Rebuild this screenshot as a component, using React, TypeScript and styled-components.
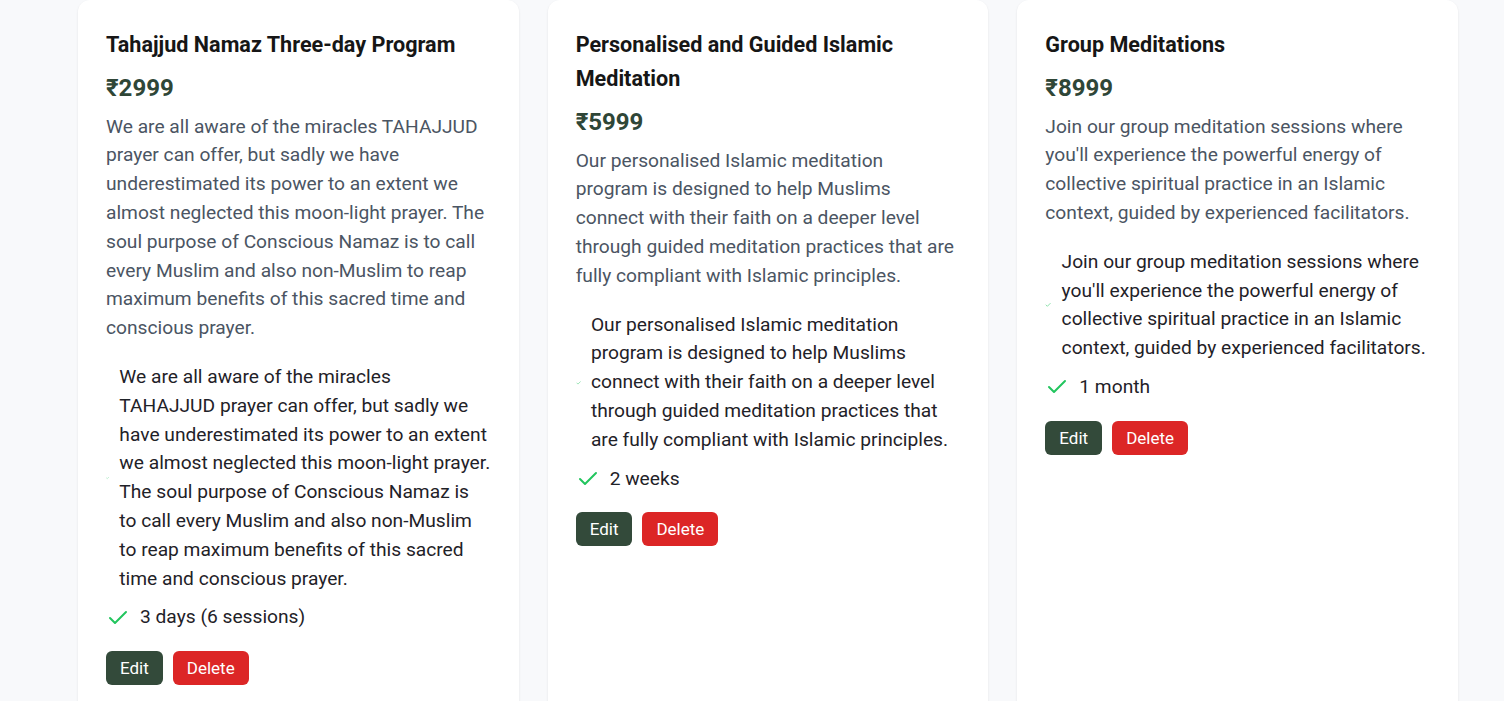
import React from "react";
import styled, { createGlobalStyle } from "styled-components";
import { Check } from "lucide-react";

const Global = createGlobalStyle`
  html, body { margin: 0; padding: 0; background: #f8f9fb; }
  body { font-family: Roboto, "Liberation Sans", Arial, sans-serif; -webkit-font-smoothing: antialiased; }
  * { box-sizing: border-box; }
`;

const Grid = styled.div`
  display: grid;
  grid-template-columns: repeat(3, 1fr);
  gap: 29px;
  padding: 0 46px 0 78px;
  align-items: stretch;
`;

const Card = styled.div`
  background: #ffffff;
  border-radius: 12px;
  box-shadow: 0 1px 3px rgba(0, 0, 0, 0.06), 0 1px 2px rgba(0, 0, 0, 0.04);
  padding: 28px;
  display: flex;
  flex-direction: column;
`;

const Title = styled.h3`
  margin: 0;
  font-size: 21.6px;
  line-height: 34px;
  font-weight: 700;
  color: #161616;
`;

const Price = styled.div`
  margin-top: 10px;
  font-size: 24px;
  line-height: 32px;
  font-weight: 700;
  color: #2f4637;
`;

const Desc = styled.p`
  margin: 8.6px 0 0;
  padding-right: 1.5px;
  font-size: 19.2px;
  line-height: 28.8px;
  color: #4b5563;
`;

const List = styled.ul`
  list-style: none;
  margin: 20px 0 0;
  padding: 0;
  display: flex;
  flex-direction: column;
  gap: 10px;
`;

const Item = styled.li`
  display: flex;
  align-items: center;
  gap: 10px;
  font-size: 19.2px;
  line-height: 28.8px;
  color: #1f2228;
  svg {
    color: #22c55e;
  }
`;

const Actions = styled.div`
  margin-top: 19px;
  display: flex;
  gap: 10px;
`;

const Btn = styled.button<{ $variant: "edit" | "delete" }>`
  border: none;
  border-radius: 6px;
  padding: 6px 14px;
  font-family: inherit;
  font-size: 17px;
  line-height: 22px;
  font-weight: 400;
  color: #ffffff;
  background: ${(p) => (p.$variant === "edit" ? "#334a3a" : "#dc2626")};
  cursor: pointer;
`;

type Program = { title: string; price: string; desc: string; duration: string };

const programs: Program[] = [
  {
    title: "Tahajjud Namaz Three-day Program",
    price: "₹2999",
    desc: "We are all aware of the miracles TAHAJJUD prayer can offer, but sadly we have underestimated its power to an extent we almost neglected this moon-light prayer. The soul purpose of Conscious Namaz is to call every Muslim and also non-Muslim to reap maximum benefits of this sacred time and conscious prayer.",
    duration: "3 days (6 sessions)",
  },
  {
    title: "Personalised and Guided Islamic Meditation",
    price: "₹5999",
    desc: "Our personalised Islamic meditation program is designed to help Muslims connect with their faith on a deeper level through guided meditation practices that are fully compliant with Islamic principles.",
    duration: "2 weeks",
  },
  {
    title: "Group Meditations",
    price: "₹8999",
    desc: "Join our group meditation sessions where you'll experience the powerful energy of collective spiritual practice in an Islamic context, guided by experienced facilitators.",
    duration: "1 month",
  },
];

export default function App() {
  return (
    <>
      <Global />
      <Grid>
        {programs.map((p) => (
          <Card key={p.title}>
            <Title>{p.title}</Title>
            <Price>{p.price}</Price>
            <Desc>{p.desc}</Desc>
            <List>
              <Item>
                <Check size={24} strokeWidth={2} />
                <span>{p.desc}</span>
              </Item>
              <Item>
                <Check size={24} strokeWidth={2} />
                <span>{p.duration}</span>
              </Item>
            </List>
            <Actions>
              <Btn $variant="edit">Edit</Btn>
              <Btn $variant="delete">Delete</Btn>
            </Actions>
          </Card>
        ))}
      </Grid>
    </>
  );
}
